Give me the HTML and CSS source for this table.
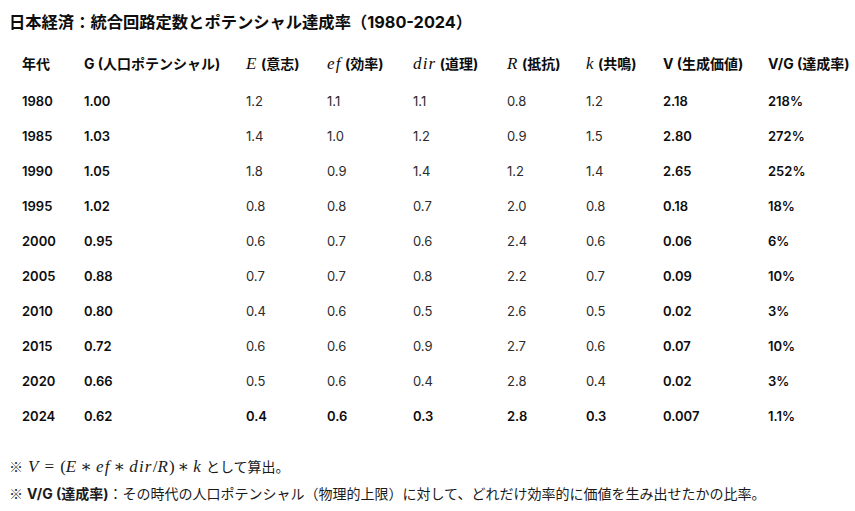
FILE: index.html
```html
<!DOCTYPE html>
<html lang="ja">
<head>
<meta charset="utf-8">
<link rel="stylesheet" href="styles.css">
</head>
<body>
<div class="page">
  <h1 class="title">日本経済：統合回路定数とポテンシャル達成率（1980-2024）</h1>
  <table class="data">
    <colgroup>
      <col class="c1"><col class="c2"><col class="c3"><col class="c4"><col class="c5"><col class="c6"><col class="c7"><col class="c8"><col class="c9">
    </colgroup>
    <thead>
      <tr>
        <th>年代</th>
        <th>G (人口ポテンシャル)</th>
        <th><span class="m">E</span> (意志)</th>
        <th><span class="m">ef</span> (効率)</th>
        <th><span class="m">dir</span> (道理)</th>
        <th><span class="m">R</span> (抵抗)</th>
        <th><span class="m">k</span> (共鳴)</th>
        <th>V (生成価値)</th>
        <th>V/G (達成率)</th>
      </tr>
    </thead>
    <tbody>
      <tr><td class="b">1980</td><td class="b">1.00</td><td>1.2</td><td>1.1</td><td>1.1</td><td>0.8</td><td>1.2</td><td class="b">2.18</td><td class="b">218%</td></tr>
      <tr><td class="b">1985</td><td class="b">1.03</td><td>1.4</td><td>1.0</td><td>1.2</td><td>0.9</td><td>1.5</td><td class="b">2.80</td><td class="b">272%</td></tr>
      <tr><td class="b">1990</td><td class="b">1.05</td><td>1.8</td><td>0.9</td><td>1.4</td><td>1.2</td><td>1.4</td><td class="b">2.65</td><td class="b">252%</td></tr>
      <tr><td class="b">1995</td><td class="b">1.02</td><td>0.8</td><td>0.8</td><td>0.7</td><td>2.0</td><td>0.8</td><td class="b">0.18</td><td class="b">18%</td></tr>
      <tr><td class="b">2000</td><td class="b">0.95</td><td>0.6</td><td>0.7</td><td>0.6</td><td>2.4</td><td>0.6</td><td class="b">0.06</td><td class="b">6%</td></tr>
      <tr><td class="b">2005</td><td class="b">0.88</td><td>0.7</td><td>0.7</td><td>0.8</td><td>2.2</td><td>0.7</td><td class="b">0.09</td><td class="b">10%</td></tr>
      <tr><td class="b">2010</td><td class="b">0.80</td><td>0.4</td><td>0.6</td><td>0.5</td><td>2.6</td><td>0.5</td><td class="b">0.02</td><td class="b">3%</td></tr>
      <tr><td class="b">2015</td><td class="b">0.72</td><td>0.6</td><td>0.6</td><td>0.9</td><td>2.7</td><td>0.6</td><td class="b">0.07</td><td class="b">10%</td></tr>
      <tr><td class="b">2020</td><td class="b">0.66</td><td>0.5</td><td>0.6</td><td>0.4</td><td>2.8</td><td>0.4</td><td class="b">0.02</td><td class="b">3%</td></tr>
      <tr class="b"><td>2024</td><td>0.62</td><td>0.4</td><td>0.6</td><td>0.3</td><td>2.8</td><td>0.3</td><td>0.007</td><td>1.1%</td></tr>
    </tbody>
  </table>
  <p class="note"><span class="kome">※</span> <span class="formula"><span class="m">V</span><span class="rel">=</span><span class="op">(</span><span class="m">E</span><span class="bin">∗</span><span class="m">ef</span><span class="bin">∗</span><span class="m">dir</span><span class="op">/</span><span class="m">R</span><span class="op">)</span><span class="bin">∗</span><span class="m">k</span></span> として算出。</p>
  <p class="note"><span class="kome">※</span> <strong>V/G (達成率)</strong>：その時代の人口ポテンシャル（物理的上限）に対して、どれだけ効率的に価値を生み出せたかの比率。</p>
</div>
</body>
</html>
```

FILE: styles.css
```css
html, body {
  margin: 0;
  padding: 0;
  background: #ffffff;
}
body {
  font-family: Inter, "Noto Sans CJK JP", sans-serif;
  color: #1a1a1a;
  font-size: 13px;
}
.page {
  padding: 10px 9px 0 9px;
}
.title {
  margin: 0;
  font-size: 16.3px;
  line-height: 24px;
  font-weight: 700;
  color: #0d0d0d;
}
.data {
  margin-top: 8.5px;
  border-collapse: collapse;
  table-layout: fixed;
  width: 837px;
}
.c1 { width: 62px; }
.c2 { width: 162px; }
.c3 { width: 81px; }
.c4 { width: 86px; }
.c5 { width: 94px; }
.c6 { width: 79px; }
.c7 { width: 77px; }
.c8 { width: 105px; }
.c9 { width: 91px; }
.data th, .data td {
  padding: 0 0 0 13px;
  text-align: left;
  white-space: nowrap;
  vertical-align: middle;
}
.data th {
  height: 41px;
  font-size: 14px;
  font-weight: 700;
  color: #0d0d0d;
}
.data td {
  height: 35px;
  font-weight: 400;
  color: #2b2b2b;
}
.data td.b, .data tr.b td {
  font-weight: 600;
  color: #0d0d0d;
}
.m {
  font-family: "Liberation Serif", "DejaVu Serif", serif;
  font-style: italic;
  font-weight: 400;
  font-size: 17px;
  letter-spacing: 1.2px;
}
.op, .rel, .bin {
  font-family: "Liberation Serif", "DejaVu Serif", serif;
  font-size: 17px;
  font-weight: 400;
}
.rel {
  margin: 0 6px 0 5px;
}
.bin {
  margin: 0 4px 0 3px;
}
.kome {
  font-family: "Noto Sans CJK JP", sans-serif;
  color: #333333;
}
.formula {
  margin-left: 1px;
}
.note {
  margin: 0;
  font-size: 14px;
  line-height: 27px;
  color: #1a1a1a;
}
.data + .note {
  margin-top: 19px;
}
.note strong {
  font-weight: 700;
}
```
